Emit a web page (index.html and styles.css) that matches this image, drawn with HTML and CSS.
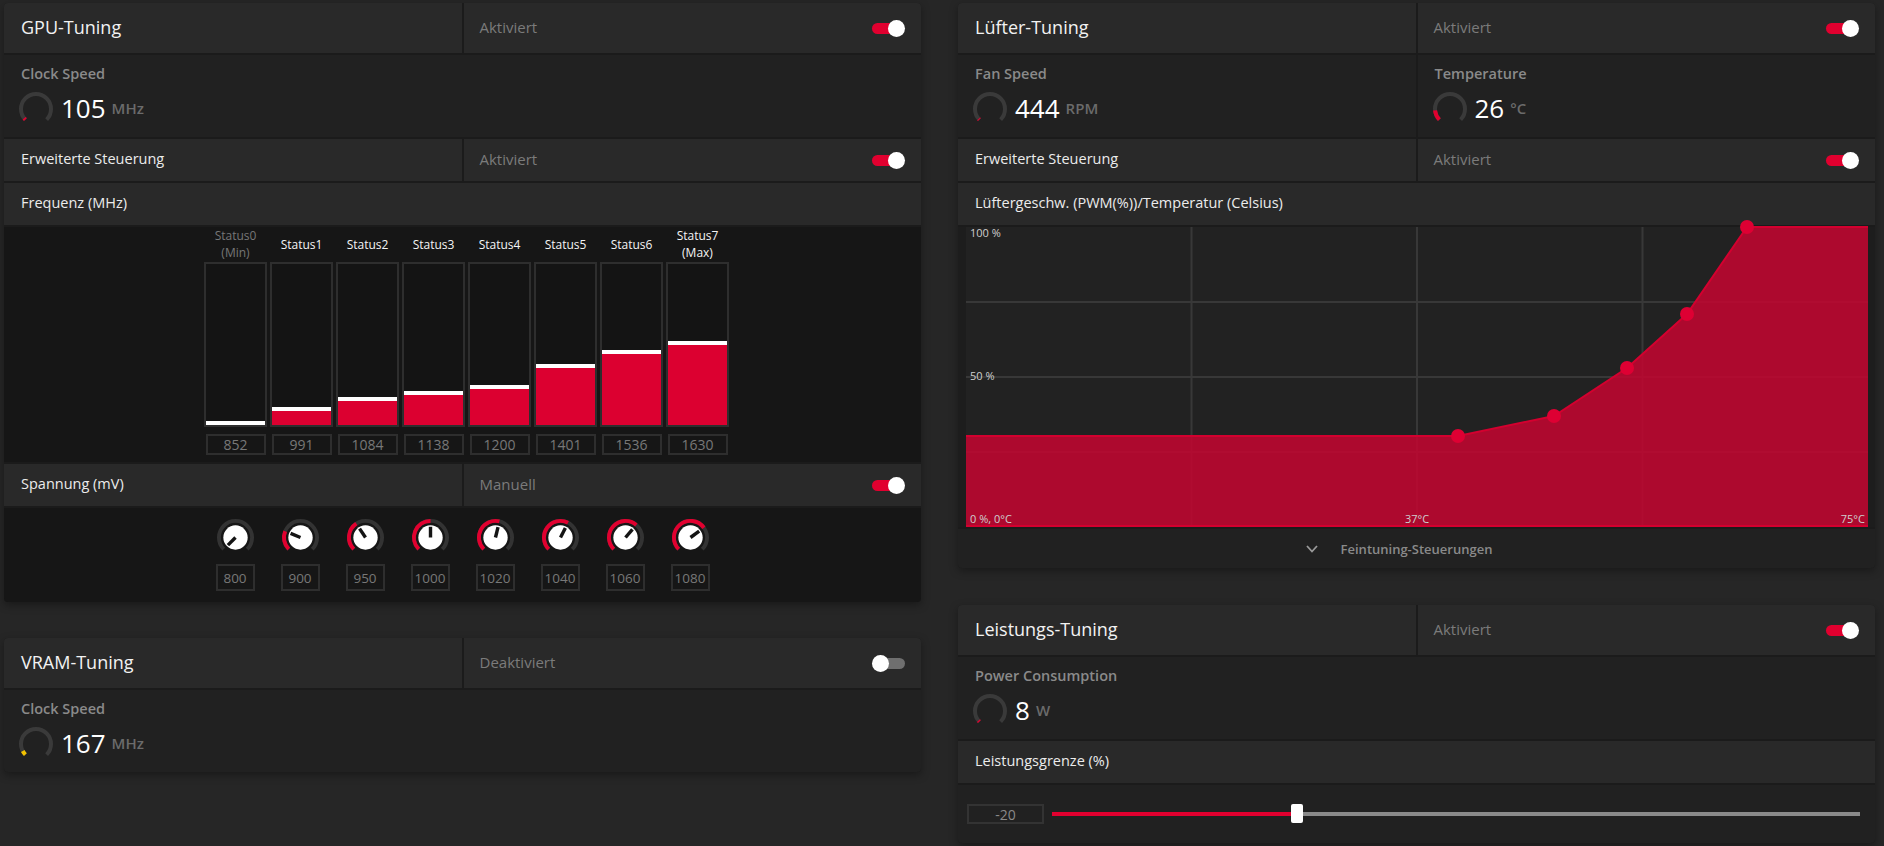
FILE: index.html
```html
<!DOCTYPE html>
<html lang="de">
<head>
<meta charset="utf-8">
<title>Tuning</title>
<link rel="stylesheet" href="styles.css">
</head>
<body>
<main class="page">
  <div class="column column-left">
    <section class="card">
      <div class="row row-head">
        <div class="cell"><h2 class="card-title">GPU-Tuning</h2></div>
        <div class="cell cell-status"><span class="status">Aktiviert</span><span class="toggle on"></span></div>
      </div>
      <div class="metrics">
        <div class="metric">
          <div class="metric-label">Clock Speed</div>
          <div class="metric-value">
            <svg class="gauge" viewBox="0 0 36 36"><path class="g-track" d="M7.39 28.61 A15 15 0 1 1 28.61 28.61"/><path class="g-red" d="M7.39 28.61 A15 15 0 0 1 6.18 27.24"/></svg>
            <span class="num">105</span><span class="unit">MHz</span>
          </div>
        </div>
      </div>
      <div class="row row-sub">
        <div class="cell"><span class="sub-title">Erweiterte Steuerung</span></div>
        <div class="cell cell-status"><span class="status">Aktiviert</span><span class="toggle on"></span></div>
      </div>
      <div class="row-single"><span class="sub-title">Frequenz (MHz)</span></div>
      <div class="bars">
        <div class="bar-col"><div class="bar-label min">Status0<br>(Min)</div><div class="bar"><div class="bar-fill" style="height:4px"></div></div><div class="bar-value">852</div></div>
        <div class="bar-col"><div class="bar-label">Status1</div><div class="bar"><div class="bar-fill" style="height:18px"></div></div><div class="bar-value">991</div></div>
        <div class="bar-col"><div class="bar-label">Status2</div><div class="bar"><div class="bar-fill" style="height:28px"></div></div><div class="bar-value">1084</div></div>
        <div class="bar-col"><div class="bar-label">Status3</div><div class="bar"><div class="bar-fill" style="height:34px"></div></div><div class="bar-value">1138</div></div>
        <div class="bar-col"><div class="bar-label">Status4</div><div class="bar"><div class="bar-fill" style="height:40px"></div></div><div class="bar-value">1200</div></div>
        <div class="bar-col"><div class="bar-label">Status5</div><div class="bar"><div class="bar-fill" style="height:61px"></div></div><div class="bar-value">1401</div></div>
        <div class="bar-col"><div class="bar-label">Status6</div><div class="bar"><div class="bar-fill" style="height:75px"></div></div><div class="bar-value">1536</div></div>
        <div class="bar-col"><div class="bar-label">Status7<br>(Max)</div><div class="bar"><div class="bar-fill" style="height:84px"></div></div><div class="bar-value">1630</div></div>
      </div>
      <div class="row row-sub">
        <div class="cell"><span class="sub-title">Spannung (mV)</span></div>
        <div class="cell cell-status"><span class="status">Manuell</span><span class="toggle on"></span></div>
      </div>
      <div class="knobs">
        <div class="knob-col"><svg class="knob" viewBox="0 0 40 40"><path class="ring" d="M7.98 32.02 A17 17 0 1 1 32.02 32.02"/><circle class="knob-face" cx="20" cy="20" r="12.5"/><line class="needle" x1="20" y1="20" x2="12.22" y2="27.78"/></svg><div class="knob-value">800</div></div>
        <div class="knob-col"><svg class="knob" viewBox="0 0 40 40"><path class="ring" d="M7.98 32.02 A17 17 0 1 1 32.02 32.02"/><path class="ring-on" d="M7.98 32.02 A17 17 0 0 1 4.29 13.49"/><circle class="knob-face" cx="20" cy="20" r="12.5"/><line class="needle" x1="20" y1="20" x2="9.84" y2="15.79"/></svg><div class="knob-value">900</div></div>
        <div class="knob-col"><svg class="knob" viewBox="0 0 40 40"><path class="ring" d="M7.98 32.02 A17 17 0 1 1 32.02 32.02"/><path class="ring-on" d="M7.98 32.02 A17 17 0 0 1 10.56 5.86"/><circle class="knob-face" cx="20" cy="20" r="12.5"/><line class="needle" x1="20" y1="20" x2="13.89" y2="10.85"/></svg><div class="knob-value">950</div></div>
        <div class="knob-col"><svg class="knob" viewBox="0 0 40 40"><path class="ring" d="M7.98 32.02 A17 17 0 1 1 32.02 32.02"/><path class="ring-on" d="M7.98 32.02 A17 17 0 0 1 20 3"/><circle class="knob-face" cx="20" cy="20" r="12.5"/><line class="needle" x1="20" y1="20" x2="20" y2="9"/></svg><div class="knob-value">1000</div></div>
        <div class="knob-col"><svg class="knob" viewBox="0 0 40 40"><path class="ring" d="M7.98 32.02 A17 17 0 1 1 32.02 32.02"/><path class="ring-on" d="M7.98 32.02 A17 17 0 0 1 23.97 3.47"/><circle class="knob-face" cx="20" cy="20" r="12.5"/><line class="needle" x1="20" y1="20" x2="22.57" y2="9.3"/></svg><div class="knob-value">1020</div></div>
        <div class="knob-col"><svg class="knob" viewBox="0 0 40 40"><path class="ring" d="M7.98 32.02 A17 17 0 1 1 32.02 32.02"/><path class="ring-on" d="M7.98 32.02 A17 17 0 0 1 27.72 4.85"/><circle class="knob-face" cx="20" cy="20" r="12.5"/><line class="needle" x1="20" y1="20" x2="24.99" y2="10.2"/></svg><div class="knob-value">1040</div></div>
        <div class="knob-col"><svg class="knob" viewBox="0 0 40 40"><path class="ring" d="M7.98 32.02 A17 17 0 1 1 32.02 32.02"/><path class="ring-on" d="M7.98 32.02 A17 17 0 0 1 31.04 7.07"/><circle class="knob-face" cx="20" cy="20" r="12.5"/><line class="needle" x1="20" y1="20" x2="27.14" y2="11.64"/></svg><div class="knob-value">1060</div></div>
        <div class="knob-col"><svg class="knob" viewBox="0 0 40 40"><path class="ring" d="M7.98 32.02 A17 17 0 1 1 32.02 32.02"/><path class="ring-on" d="M7.98 32.02 A17 17 0 1 1 33.75 10.01"/><circle class="knob-face" cx="20" cy="20" r="12.5"/><line class="needle" x1="20" y1="20" x2="28.9" y2="13.53"/></svg><div class="knob-value">1080</div></div>
      </div>
    </section>

    <section class="card">
      <div class="row row-head">
        <div class="cell"><h2 class="card-title">VRAM-Tuning</h2></div>
        <div class="cell cell-status"><span class="status">Deaktiviert</span><span class="toggle off"></span></div>
      </div>
      <div class="metrics">
        <div class="metric">
          <div class="metric-label">Clock Speed</div>
          <div class="metric-value">
            <svg class="gauge" viewBox="0 0 36 36"><path class="g-track" d="M7.39 28.61 A15 15 0 1 1 28.61 28.61"/><path class="g-yellow" d="M7.39 28.61 A15 15 0 0 1 4.76 25.04"/></svg>
            <span class="num">167</span><span class="unit">MHz</span>
          </div>
        </div>
      </div>
    </section>
  </div>

  <div class="column column-right">
    <section class="card">
      <div class="row row-head">
        <div class="cell"><h2 class="card-title">Lüfter-Tuning</h2></div>
        <div class="cell cell-status"><span class="status">Aktiviert</span><span class="toggle on"></span></div>
      </div>
      <div class="metrics two">
        <div class="metric">
          <div class="metric-label">Fan Speed</div>
          <div class="metric-value">
            <svg class="gauge" viewBox="0 0 36 36"><path class="g-track" d="M7.39 28.61 A15 15 0 1 1 28.61 28.61"/><path class="g-red" d="M7.39 28.61 A15 15 0 0 1 6.68 27.84"/></svg>
            <span class="num">444</span><span class="unit">RPM</span>
          </div>
        </div>
        <div class="metric">
          <div class="metric-label">Temperature</div>
          <div class="metric-value">
            <svg class="gauge" viewBox="0 0 36 36"><path class="g-track" d="M7.39 28.61 A15 15 0 1 1 28.61 28.61"/><path class="g-red" d="M7.39 28.61 A15 15 0 0 1 3.06 19.31"/></svg>
            <span class="num">26</span><span class="unit">°C</span>
          </div>
        </div>
      </div>
      <div class="row row-sub">
        <div class="cell"><span class="sub-title">Erweiterte Steuerung</span></div>
        <div class="cell cell-status"><span class="status">Aktiviert</span><span class="toggle on"></span></div>
      </div>
      <div class="row-single"><span class="sub-title">Lüftergeschw. (PWM(%))/Temperatur (Celsius)</span></div>
      <div class="chart-wrap">
        <svg class="chart" viewBox="0 0 902 300">
          <rect class="chart-bg" width="902" height="300"/>
          <g class="grid">
            <line x1="225.5" y1="0" x2="225.5" y2="300"/>
            <line x1="451" y1="0" x2="451" y2="300"/>
            <line x1="676.5" y1="0" x2="676.5" y2="300"/>
            <line x1="0" y1="75" x2="902" y2="75"/>
            <line x1="0" y1="150" x2="902" y2="150"/>
            <line x1="0" y1="225" x2="902" y2="225"/>
          </g>
          <polygon class="curve-fill" points="0,209 492,209 588,189 661,141 721,87 781,0 902,0 902,300 0,300"/>
          <polyline class="curve-line" points="0,209 492,209 588,189 661,141 721,87 781,0 902,0"/>
          <line class="curve-base" x1="0" y1="299" x2="902" y2="299"/>
          <g class="curve-dots">
            <circle cx="492" cy="209" r="7"/>
            <circle cx="588" cy="189" r="7"/>
            <circle cx="661" cy="141" r="7"/>
            <circle cx="721" cy="87" r="7"/>
            <circle cx="781" cy="0" r="7"/>
          </g>
          <g class="chart-text">
            <text x="4" y="10">100 %</text>
            <text x="4" y="153">50 %</text>
            <text x="4" y="296">0 %, 0°C</text>
            <text x="451" y="296" text-anchor="middle">37°C</text>
            <text x="899" y="296" text-anchor="end">75°C</text>
          </g>
        </svg>
      </div>
      <div class="chart-foot">
        <svg class="chevron" viewBox="0 0 12 8"><path d="M1 1 L6 6.5 L11 1"/></svg>
        <span class="foot-text">Feintuning-Steuerungen</span>
      </div>
    </section>

    <section class="card">
      <div class="row row-head">
        <div class="cell"><h2 class="card-title">Leistungs-Tuning</h2></div>
        <div class="cell cell-status"><span class="status">Aktiviert</span><span class="toggle on"></span></div>
      </div>
      <div class="metrics">
        <div class="metric">
          <div class="metric-label">Power Consumption</div>
          <div class="metric-value">
            <svg class="gauge" viewBox="0 0 36 36"><path class="g-track" d="M7.39 28.61 A15 15 0 1 1 28.61 28.61"/><path class="g-red" d="M7.39 28.61 A15 15 0 0 1 6.51 27.64"/></svg>
            <span class="num">8</span><span class="unit">W</span>
          </div>
        </div>
      </div>
      <div class="row-single"><span class="sub-title">Leistungsgrenze (%)</span></div>
      <div class="slider-row">
        <div class="slider-value">-20</div>
        <div class="slider">
          <div class="slider-fill" style="width:30.3%"></div>
          <div class="slider-thumb" style="left:calc(30.3% - 6px)"></div>
        </div>
      </div>
    </section>
  </div>
</main>
</body>
</html>
```

FILE: styles.css
```css
* { box-sizing: border-box; margin: 0; padding: 0; }

html, body { background: #262626; }

body {
  width: 1884px;
  height: 846px;
  overflow: hidden;
  font-family: "Open Sans", Roboto, "Liberation Sans", sans-serif;
  color: #f0f0f0;
}

.page {
  display: grid;
  grid-template-columns: 917px 917px;
  column-gap: 37px;
  align-items: start;
  padding: 3px 0 0 4px;
}

.column { display: flex; flex-direction: column; gap: 36px; }
.column-right { gap: 37px; }

.card {
  background: #1b1b1b;
  border-radius: 4px;
  overflow: hidden;
  display: flex;
  flex-direction: column;
  gap: 2px;
  box-shadow: 0 3px 8px rgba(0, 0, 0, 0.35);
}

.row { display: grid; grid-template-columns: 1fr 1fr; column-gap: 2px; }

.cell {
  background: #292929;
  display: flex;
  align-items: center;
  padding: 0 16px 3px 17px;
}

.row-head .cell { height: 50px; }
.row-sub .cell { height: 42px; }

.cell-status { justify-content: space-between; padding-left: 16px; }
.cell-status .toggle { margin-top: 3px; }

.card-title { font-size: 18px; font-weight: 400; color: #f2f2f2; }

.status { font-size: 15px; color: #7b7b7b; }

.sub-title { font-size: 14.5px; color: #ececec; }

.row-single {
  height: 42px;
  background: #292929;
  display: flex;
  align-items: center;
  padding: 0 0 3px 17px;
}

/* toggle */
.toggle { position: relative; width: 33px; height: 17px; flex: none; }
.toggle::before {
  content: "";
  position: absolute;
  left: 0;
  top: 3px;
  width: 31px;
  height: 11px;
  border-radius: 6px;
  background: #e1002f;
}
.toggle::after {
  content: "";
  position: absolute;
  top: 0;
  right: 0;
  width: 17px;
  height: 17px;
  border-radius: 50%;
  background: #ffffff;
}
.toggle.off::before { left: 2px; background: #6f6f6f; }
.toggle.off::after { right: auto; left: 0; }

/* metrics */
.metrics { display: grid; grid-template-columns: 1fr; }
.metrics.two { grid-template-columns: 1fr 1fr; column-gap: 2px; }

.metric { background: #212121; height: 82px; padding: 10px 17px 0 14px; }

.metric-label {
  font-size: 14.5px;
  font-weight: 600;
  color: #8a8a8a;
  line-height: 18px;
  padding-left: 3px;
  margin-bottom: 9px;
}

.metric-value { display: flex; align-items: center; height: 34px; }

.gauge { width: 36px; height: 36px; margin-right: 7px; flex: none; }
.g-track { fill: none; stroke: #3a3a3a; stroke-width: 4; }
.g-red { fill: none; stroke: #e1002f; stroke-width: 4; }
.g-yellow { fill: none; stroke: #f2c200; stroke-width: 4; }

.num { font-size: 26px; color: #ffffff; line-height: 1; margin-top: -2px; }
.unit { font-size: 15px; font-weight: 600; color: #6b6b6b; margin-left: 6px; margin-top: -2px; }

/* frequency bars */
.bars {
  background: #161616;
  height: 235px;
  display: flex;
  justify-content: center;
  gap: 3px;
  padding-left: 8px;
}

.bar-col { width: 63px; display: flex; flex-direction: column; align-items: center; }

.bar-label {
  height: 34px;
  margin-bottom: 1px;
  display: flex;
  align-items: center;
  text-align: center;
  font-size: 12px;
  line-height: 17px;
  font-weight: 400;
  color: #f4f4f4;
}
.bar-label.min { color: #777777; }

.bar {
  width: 63px;
  height: 165px;
  border: 2px solid #2e2e2e;
  background: #141414;
  display: flex;
  flex-direction: column;
  justify-content: flex-end;
}

.bar-fill { background: #dc0030; border-top: 4px solid #ffffff; }

.bar-value {
  margin-top: 7px;
  width: 60px;
  height: 21px;
  border: 2px solid #2e2e2e;
  font-size: 14px;
  color: #787878;
  display: flex;
  align-items: center;
  justify-content: center;
}

/* voltage knobs */
.knobs {
  background: #161616;
  height: 94px;
  display: flex;
  justify-content: center;
  gap: 26px;
  padding-top: 10px;
}

.knob-col { width: 39px; display: flex; flex-direction: column; align-items: center; }
.knob { width: 39px; height: 39px; }
.ring { fill: none; stroke: #333333; stroke-width: 4; }
.ring-on { fill: none; stroke: #e1002f; stroke-width: 4; }
.knob-face { fill: #ffffff; }
.needle { stroke: #141414; stroke-width: 3.5; }

.knob-value {
  margin-top: 7px;
  width: 39px;
  height: 27px;
  border: 2px solid #2e2e2e;
  font-size: 13.5px;
  color: #787878;
  display: flex;
  align-items: center;
  justify-content: center;
}

/* fan chart */
.chart-wrap { background: #1d1d1d; height: 300px; padding: 0 7px 0 8px; }
.chart { display: block; width: 902px; height: 300px; overflow: visible; }
.chart-bg { fill: #222222; }
.grid line { stroke: #383838; stroke-width: 2; }
.curve-fill { fill: rgba(192, 6, 48, 0.88); }
.curve-line { fill: none; stroke: #d3002f; stroke-width: 2; }
.curve-base { stroke: #d3002f; stroke-width: 2; }
.curve-dots circle { fill: #de0033; }
.chart-text text { font-family: "Open Sans", Roboto, sans-serif; font-size: 11px; fill: #cfcfcf; }

.chart-foot {
  background: #212121;
  height: 39px;
  display: grid;
  grid-template-columns: 1fr auto 1fr;
  align-items: center;
}
.chevron {
  grid-column: 1;
  justify-self: end;
  width: 12px;
  height: 8px;
  margin-right: 23px;
  fill: none;
  stroke: #9a9a9a;
  stroke-width: 1.8;
}
.foot-text { grid-column: 2; font-size: 13px; font-weight: 600; color: #8a8a8a; }

/* power slider */
.slider-row {
  background: #212121;
  height: 58px;
  display: flex;
  align-items: center;
  gap: 8px;
  padding: 0 15px 0 9px;
}

.slider-value {
  width: 77px;
  height: 20px;
  border: 2px solid #333333;
  font-size: 14px;
  color: #8a8a8a;
  display: flex;
  align-items: center;
  justify-content: center;
}

.slider { position: relative; flex: 1; height: 4px; background: #8a8a8a; }
.slider-fill { height: 100%; background: #e1002f; }
.slider-thumb {
  position: absolute;
  top: -8px;
  width: 12px;
  height: 19px;
  border-radius: 2px;
  background: #ffffff;
}
```
